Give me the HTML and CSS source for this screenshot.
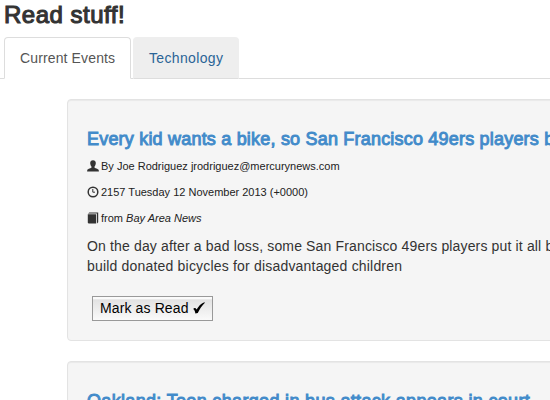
FILE: index.html
```
<!DOCTYPE html>
<html lang="en">
<head>
<meta charset="utf-8">
<title>Read stuff!</title>
<link rel="stylesheet" href="styles.css">
</head>
<body>
<h3 class="page-title">Read stuff!</h3>
<ul class="tabs">
  <li class="tab tab-active"><a>Current Events</a></li>
  <li class="tab tab-hover"><a>Technology</a></li>
</ul>
<main class="stories">
  <article class="well">
    <h4 class="headline">Every kid wants a bike, so San Francisco 49ers players b</h4>
    <p class="meta">
      <svg class="icon" viewBox="0 0 12 12"><path d="M6 .2C4.200.2 3.200 1.300 3.200 3c0 1.500.6 2.900 1.300 3.600v.9C4.500 8.300.7 8.600.3 10.100L.1 11.500h11.800l-.2-1.400C11.300 8.600 7.500 8.300 7.500 7.500v-.9C8.200 5.900 8.800 4.500 8.800 3 8.800 1.300 7.800.2 6 .2z"/></svg>
      <span>By Joe Rodriguez jrodriguez@mercurynews.com</span>
    </p>
    <p class="meta">
      <svg class="icon" viewBox="0 0 12 12"><circle class="ring" cx="6" cy="6" r="4.8"/><path class="hands" d="M5.800 3v3.200H8"/></svg>
      <span>2157 Tuesday 12 November 2013 (+0000)</span>
    </p>
    <p class="meta">
      <svg class="icon" viewBox="0 0 12 12"><path d="M.8 2.200h8.400v9.300H1.600L.8 10.700z"/><path d="M1 1.600 2.300.4h8.900v9.800l-1.200 1.200V1.600z"/></svg>
      <span>from <em>Bay Area News</em></span>
    </p>
    <p class="summary">On the day after a bad loss, some San Francisco 49ers players put it all b<br><span class="loose">build donated bicycles for disadvantaged children</span></p>
    <button class="mark"><span>Mark as Read</span> <svg class="check" viewBox="0 0 12 12"><path d="M.2 7C1.200 5.500 2.800 5.600 3.600 7.600 5.600 4 8 1.500 11.300.2L11.900.7C9 3.500 6.900 6.800 4.800 11L2.400 11.500C2 9.500 1.500 7.500.2 7z"/></svg></button>
  </article>
  <article class="well">
    <h4 class="headline headline-wide">Oakland: Teen charged in bus attack appears in court</h4>
  </article>
</main>
</body>
</html>
```
FILE: styles.css
```
* { box-sizing: border-box; }
html { overflow: hidden; }
body {
  margin: 0;
  height: 400px;
  overflow: hidden;
  background: #fff;
  color: #333;
  font: 14px/20px "Liberation Sans", Arial, sans-serif;
}
.page-title {
  margin: 0 0 8px 4px;
  height: 29px;
  font-size: 24px;
  line-height: 29px;
  font-weight: normal;
  letter-spacing: 0.5px;
  -webkit-text-stroke: 1.1px #333;
}
.tabs {
  display: flex;
  gap: 2px;
  margin: 0;
  padding: 0 0 0 4px;
  height: 42px;
  list-style: none;
  border-bottom: 1px solid #ddd;
}
.tab {
  height: 42px;
  padding: 10px 15px;
  border: 1px solid transparent;
  border-radius: 4px 4px 0 0;
  white-space: nowrap;
}
.tab-active {
  width: 127px;
  color: #555;
  background: #fff;
  border-color: #ddd #ddd #fff;
  letter-spacing: 0.13px;
}
.tab-hover {
  width: 106px;
  color: #2a6496;
  background: #eee;
  border-color: #eee #eee #ddd;
  letter-spacing: 0.35px;
}
.stories { padding: 20px 0 0 67px; }
.well {
  width: 620px;
  height: 242px;
  margin-bottom: 20px;
  padding: 19px;
  background: #f5f5f5;
  border: 1px solid #e3e3e3;
  border-radius: 4px;
  box-shadow: inset 0 1px 1px rgba(0, 0, 0, 0.05);
}
.headline {
  margin: 10px 0 7px;
  color: #428bca;
  font-size: 18px;
  line-height: 20px;
  font-weight: normal;
  letter-spacing: 0.2px;
  -webkit-text-stroke: 0.95px #428bca;
  white-space: nowrap;
}
.headline-wide { letter-spacing: 0.33px; }
.meta {
  display: flex;
  align-items: center;
  gap: 2px;
  height: 20px;
  margin: 0 0 6px;
  color: #222;
  font-size: 11px;
  white-space: nowrap;
}
.icon {
  width: 12px;
  height: 12px;
  fill: #333;
}
.icon .ring, .icon .hands {
  fill: none;
  stroke: #333;
  stroke-width: 1.5;
}
.icon .hands { stroke-width: 1; }
.summary {
  margin: 8px 0 20px;
  letter-spacing: 0.15px;
  white-space: nowrap;
}
.loose { letter-spacing: 0.19px; }
.mark {
  display: flex;
  align-items: center;
  gap: 4px;
  width: 121px;
  height: 25px;
  margin: 0 0 0 5px;
  padding: 0 0 2px 7px;
  border: 1px solid #999;
  background: linear-gradient(#fafafa 0, #fafafa 8%, #e2e2e2 12%, #fafafa 100%);
  color: #000;
  font: 14px/20px "Liberation Sans", Arial, sans-serif;
  letter-spacing: 0.12px;
  white-space: nowrap;
}
.check { width: 12px; height: 12px; }
```
